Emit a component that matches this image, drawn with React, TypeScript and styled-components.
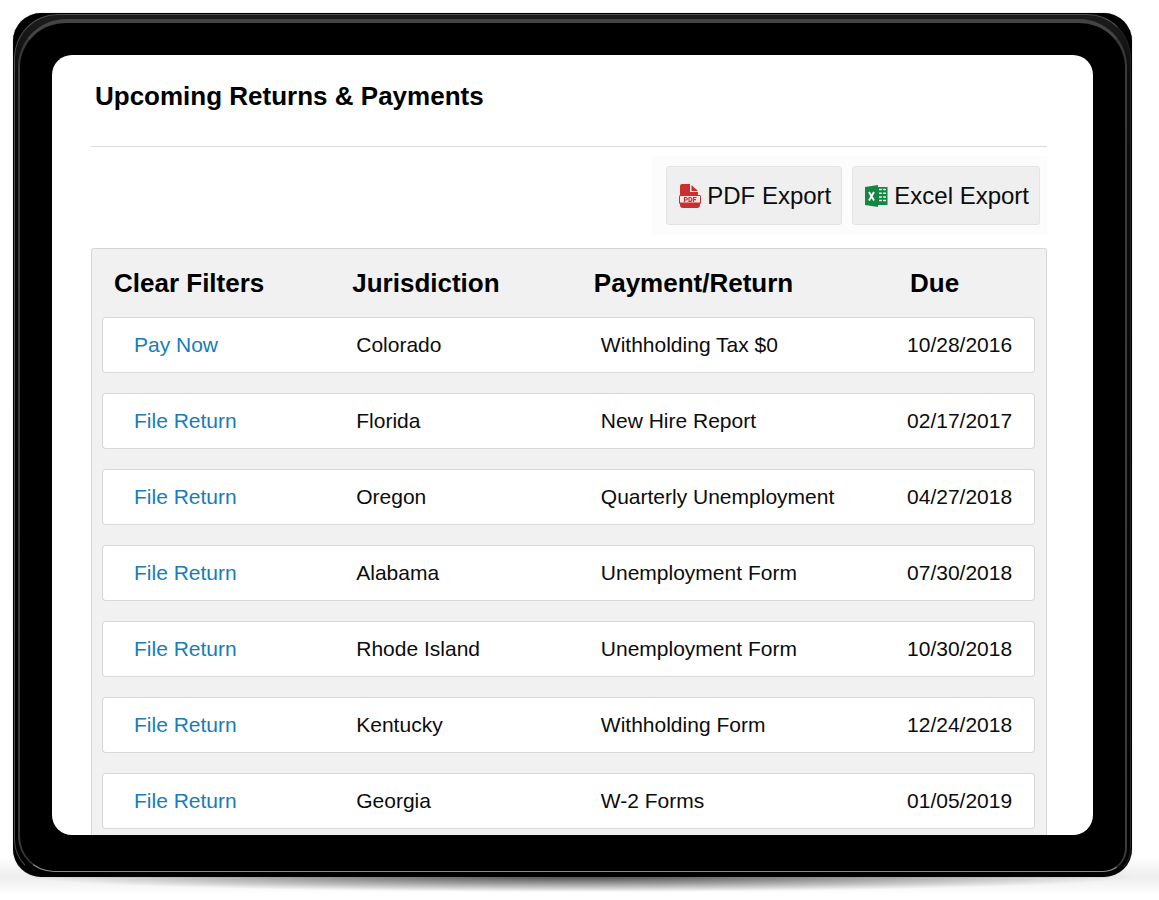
import React from "react";
import styled, { createGlobalStyle } from "styled-components";

const GlobalStyle = createGlobalStyle`
  *, *::before, *::after { box-sizing: border-box; }
  body {
    margin: 0;
    background: #ffffff;
    color: #0c0c0c;
    font-family: "Liberation Sans", Arial, Helvetica, sans-serif;
  }
`;

const Page = styled.div`
  padding: 13px 27px 23px 13px;
  background:
    radial-gradient(ellipse 48% 16px at 50% calc(100% - 24px), rgba(0, 0, 0, 0.7), transparent),
    linear-gradient(to top, #ffffff 0, #ffffff 6px, #eeeeee 22px, #f3f3f3 30px, #ffffff 42px);
`;

const Device = styled.main`
  padding: 1px;
  border-radius: 28px;
  background: #000000;
  box-shadow: 0 0 1px #777777;
`;

const Rim = styled.div`
  padding: 4px 3px 3px 3px;
  border: 1px solid #4c4c4c;
  border-right-color: #222222;
  border-bottom-color: #000000;
  border-radius: 44px 44px 27px 36px;
  background: linear-gradient(#1c1c1c 0, #0c0c0c 60px, #000000 100%);
`;

const Bezel = styled.div`
  padding: 32px 32px 36px 32px;
  border-style: solid;
  border-width: 4px 2px 1px 2px;
  border-color: #444444 #3a3a3a #8a8a8a #3a3a3a;
  border-radius: 48px 48px 24px 36px;
  background: #000000;
`;

const Screen = styled.section`
  overflow: hidden;
  padding: 25px 46px 0 39px;
  border-radius: 20px;
  background: #ffffff;
`;

const Title = styled.h1`
  margin: 0;
  padding: 0 4px 34px;
  border-bottom: 1px solid #dcdcdc;
  color: #000000;
  font-size: 26px;
  line-height: 32px;
`;

const Toolbar = styled.div`
  display: flex;
  gap: 10px;
  width: fit-content;
  margin: 9px 0 13px auto;
  padding: 10px 7px 10px 14px;
  background: #fcfcfc;
`;

const ExportButton = styled.button`
  display: flex;
  align-items: center;
  gap: 6px;
  height: 59px;
  padding: 0 10px 0 12px;
  border: 1px solid #e4e4e4;
  border-radius: 3px;
  background: #efefef;
  color: #0c0c0c;
  font: 24px "Liberation Sans", Arial, sans-serif;
  cursor: pointer;
`;

const Panel = styled.div`
  overflow: hidden;
  padding: 0 11px 0 10px;
  border: 1px solid #d6d6d6;
  border-bottom: 0;
  border-radius: 3px 3px 0 0;
  background: #f1f1f1;
`;

const ReturnsTable = styled.table`
  width: 100%;
  margin-bottom: -14px;
  border-spacing: 0 20px;
  table-layout: fixed;
`;

const HeadCell = styled.th<{ $width: string; $inset: number }>`
  width: ${(p) => p.$width};
  padding: 0 0 0 ${(p) => p.$inset}px;
  color: #000000;
  font-size: 26px;
  line-height: 28px;
  text-align: left;
`;

const Cell = styled.td<{ $inset: number }>`
  height: 56px;
  padding: 0 0 0 ${(p) => p.$inset}px;
  border: solid #d8d8d8;
  border-width: 1px 0;
  background: #ffffff;
  font-size: 21px;
  line-height: 24px;

  &:first-child {
    border-left-width: 1px;
    border-radius: 4px 0 0 4px;
  }
  &:last-child {
    border-right-width: 1px;
    border-radius: 0 4px 4px 0;
  }
`;

const ActionLink = styled.a`
  color: #157dbb;
  text-decoration: none;
`;

const PdfIcon = () => (
  <svg width="22" height="24" viewBox="0 0 22 24" aria-hidden="true">
    <path d="M3 0h8v8h8v3h2v10a3 3 0 0 1-3 3H4a3 3 0 0 1-3-3V2a2 2 0 0 1 2-2z" fill="#c9302f" />
    <path d="M12.500 1 19 7h-6.500z" fill="#c9302f" />
    <rect x="0" y="11" width="22" height="9" rx="1.500" fill="#c9302f" />
    <rect x="1" y="12" width="20" height="6.500" fill="#f8e6e4" />
    <path
      d="M5.500 18v-4.500h1.500a1.200 1.200 0 0 1 0 2.500H5.500M10 13.500V17.500h.8a2 2 0 0 0 0-4zM14.500 18v-4.500h3M14.500 15.700h2.500"
      fill="none" stroke="#c9302f" strokeWidth="1.200"
    />
  </svg>
);

const ExcelIcon = () => (
  <svg width="23" height="24" viewBox="0 0 23 24" aria-hidden="true">
    <path d="M0 3 13 1v22L0 21z" fill="#128642" />
    <path d="M13 3h9.500v18H13" fill="#128642" />
    <path d="M14 5.500h7M14 9.200h7M14 12.900h7M14 16.600h7" stroke="#efefef" strokeWidth="1.500" />
    <path d="M17.500 4.500v15" stroke="#128642" strokeWidth="1.200" />
    <path d="m4 8 5 8.500M9 8l-5 8.500" stroke="#ffffff" strokeWidth="1.900" fill="none" />
  </svg>
);

const columns = [
  { label: "Clear Filters", width: "25%", head: 12, body: 31 },
  { label: "Jurisdiction", width: "26%", head: 17, body: 21 },
  { label: "Payment/Return", width: "34%", head: 16, body: 23 },
  { label: "Due", width: "15%", head: 15, body: 12 },
];

const returns = [
  ["Pay Now", "Colorado", "Withholding Tax $0", "10/28/2016"],
  ["File Return", "Florida", "New Hire Report", "02/17/2017"],
  ["File Return", "Oregon", "Quarterly Unemployment", "04/27/2018"],
  ["File Return", "Alabama", "Unemployment Form", "07/30/2018"],
  ["File Return", "Rhode Island", "Unemployment Form", "10/30/2018"],
  ["File Return", "Kentucky", "Withholding Form", "12/24/2018"],
  ["File Return", "Georgia", "W-2 Forms", "01/05/2019"],
];

export default function App() {
  return (
    <Page>
      <GlobalStyle />
      <Device>
        <Rim>
          <Bezel>
            <Screen>
              <Title>Upcoming Returns &amp; Payments</Title>
              <Toolbar>
                <ExportButton type="button"><PdfIcon />PDF Export</ExportButton>
                <ExportButton type="button"><ExcelIcon />Excel Export</ExportButton>
              </Toolbar>
              <Panel>
                <ReturnsTable>
                  <thead>
                    <tr>
                      {columns.map((c) => (
                        <HeadCell key={c.label} scope="col" $width={c.width} $inset={c.head}>
                          {c.label}
                        </HeadCell>
                      ))}
                    </tr>
                  </thead>
                  <tbody>
                    {returns.map((row) => (
                      <tr key={row[3]}>
                        {row.map((text, i) => (
                          <Cell key={columns[i].label} $inset={columns[i].body}>
                            {i === 0 ? <ActionLink href="#">{text}</ActionLink> : text}
                          </Cell>
                        ))}
                      </tr>
                    ))}
                  </tbody>
                </ReturnsTable>
              </Panel>
            </Screen>
          </Bezel>
        </Rim>
      </Device>
    </Page>
  );
}
